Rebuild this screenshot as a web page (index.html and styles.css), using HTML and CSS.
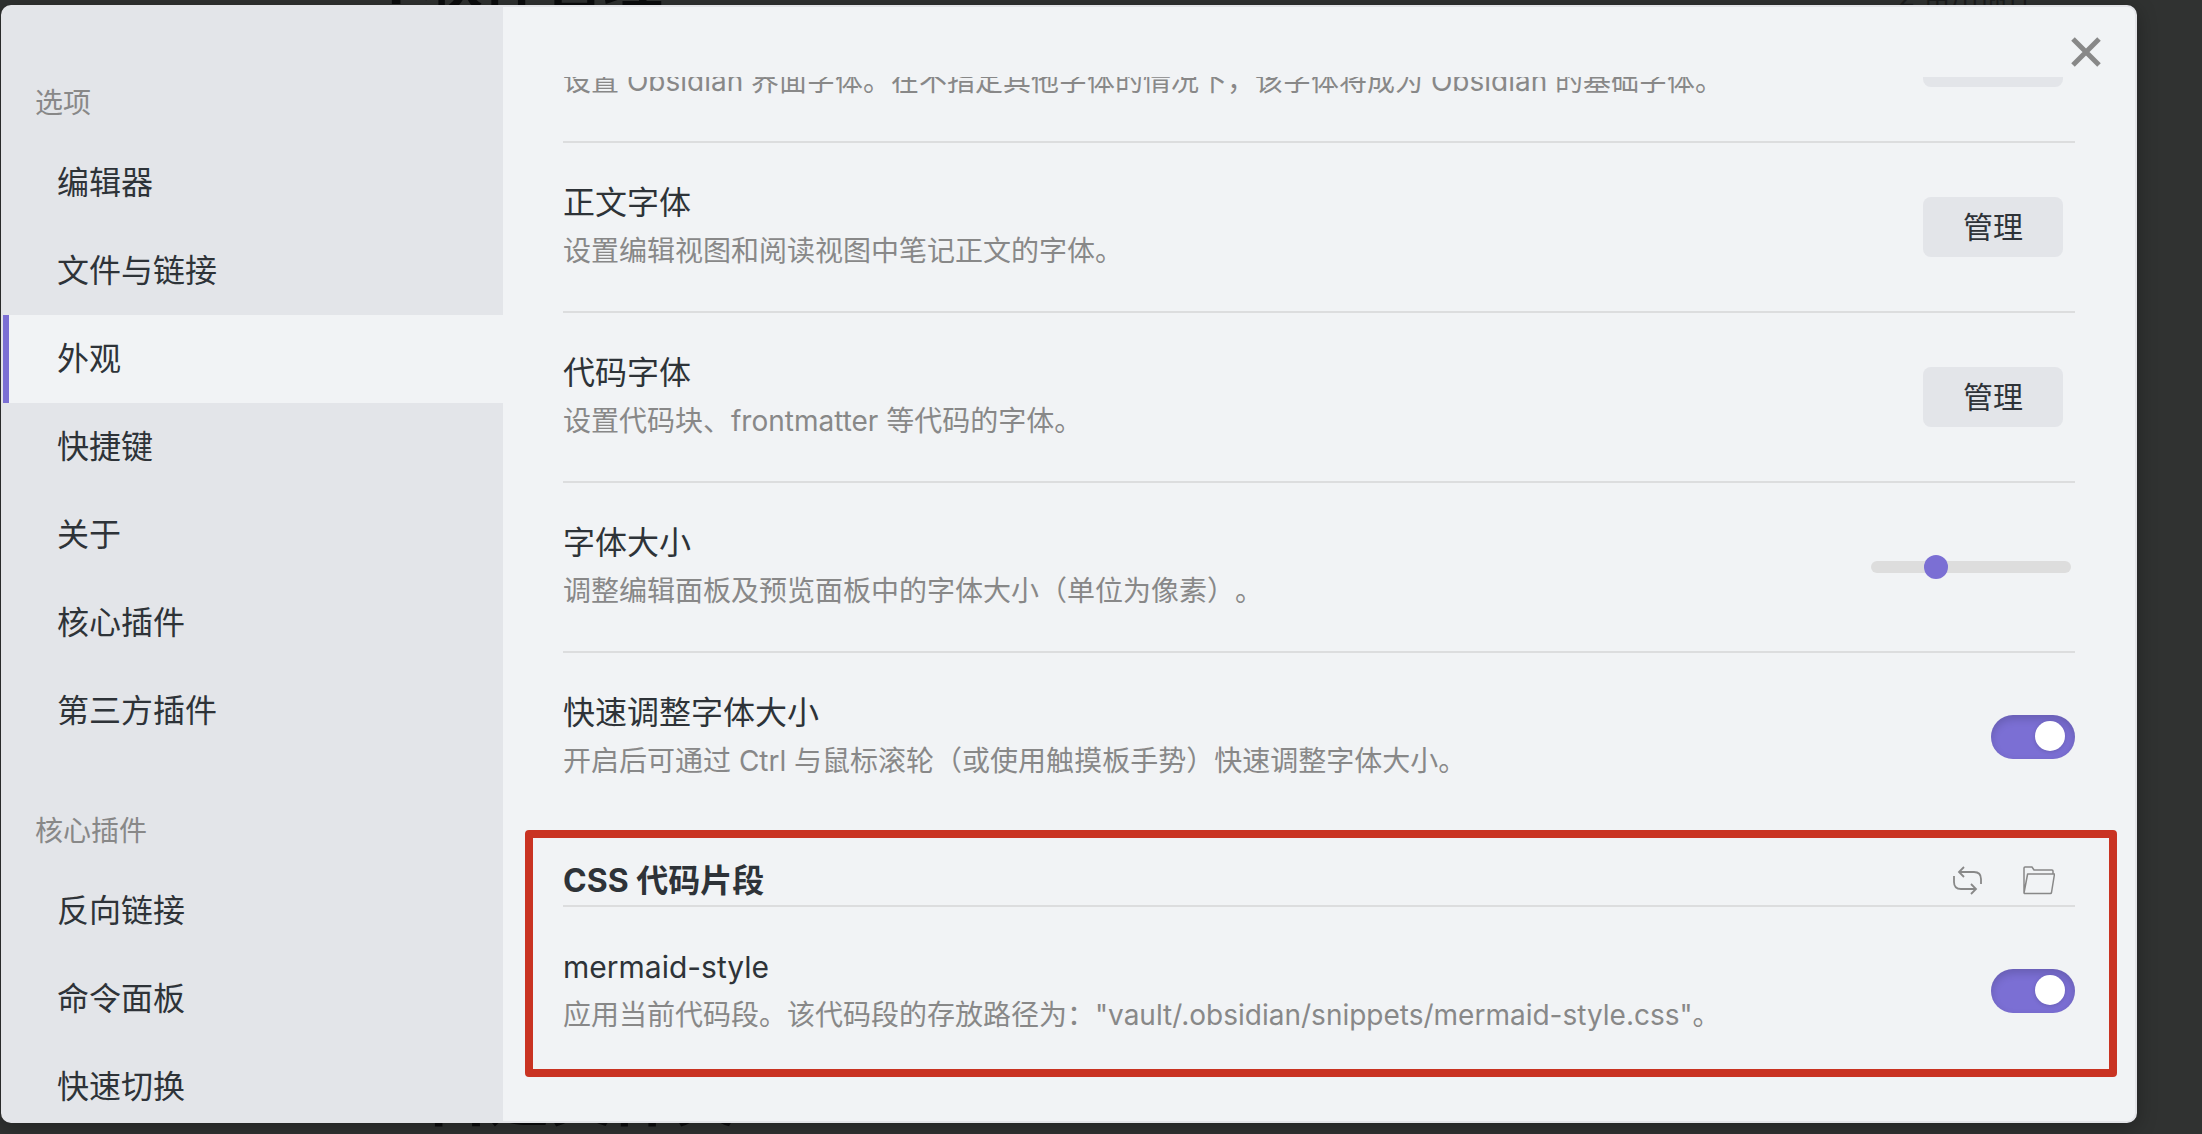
FILE: index.html
```html
<!DOCTYPE html>
<html lang="zh-CN">
<head>
<meta charset="utf-8">
<title>设置</title>
<meta name="viewport" content="width=device-width, initial-scale=1">
<link rel="stylesheet" href="styles.css">
</head>
<body>
<div class="backdrop" aria-hidden="true">
  <span class="note note-top">4 软件管理</span>
  <span class="note note-outline">2 常用插件</span>
  <span class="note note-bottom">自建文件夹</span>
</div>
<div class="modal" role="dialog" aria-label="设置">
  <nav class="sidebar">
    <h2 class="nav-title">选项</h2>
    <a class="nav-item" href="#editor">编辑器</a>
    <a class="nav-item" href="#files">文件与链接</a>
    <a class="nav-item active" href="#appearance" aria-current="page">外观</a>
    <a class="nav-item" href="#hotkeys">快捷键</a>
    <a class="nav-item" href="#about">关于</a>
    <a class="nav-item" href="#core">核心插件</a>
    <a class="nav-item" href="#community">第三方插件</a>
    <h2 class="nav-title">核心插件</h2>
    <a class="nav-item" href="#backlink">反向链接</a>
    <a class="nav-item" href="#command">命令面板</a>
    <a class="nav-item" href="#switcher">快速切换</a>
  </nav>
  <main class="content">
    <div class="row">
      <div class="info">
        <div class="name">界面字体</div>
        <div class="desc">设置 Obsidian 界面字体。在不指定其他字体的情况下，该字体将成为 Obsidian 的基础字体。</div>
      </div>
      <button class="btn" type="button">管理</button>
    </div>
    <div class="row">
      <div class="info">
        <div class="name">正文字体</div>
        <div class="desc">设置编辑视图和阅读视图中笔记正文的字体。</div>
      </div>
      <button class="btn" type="button">管理</button>
    </div>
    <div class="row">
      <div class="info">
        <div class="name">代码字体</div>
        <div class="desc">设置代码块、frontmatter 等代码的字体。</div>
      </div>
      <button class="btn" type="button">管理</button>
    </div>
    <div class="row">
      <div class="info">
        <label class="name" for="font-size">字体大小</label>
        <div class="desc">调整编辑面板及预览面板中的字体大小（单位为像素）。</div>
      </div>
      <input class="slider" id="font-size" type="range" min="10" max="30" value="16">
    </div>
    <div class="row">
      <div class="info">
        <label class="name" for="quick-size">快速调整字体大小</label>
        <div class="desc">开启后可通过 Ctrl 与鼠标滚轮（或使用触摸板手势）快速调整字体大小。</div>
      </div>
      <input class="toggle" id="quick-size" type="checkbox" checked>
    </div>
    <section class="snippets">
      <header class="heading">
        <h3 class="heading-text">CSS 代码片段</h3>
        <button class="icon-btn" type="button" aria-label="重新加载代码片段">
          <svg width="32" height="32" viewBox="0 0 32 32" fill="none" stroke="#888" stroke-width="1.800">
            <path d="M11 2 6 7l5 5M6 7h15q7 0 7 7v5M1 11v6q0 7 7 7h15M18 19l5 5-5 5"/>
          </svg>
        </button>
        <button class="icon-btn" type="button" aria-label="打开代码片段文件夹">
          <svg width="32" height="32" viewBox="0 0 32 32" fill="none" stroke="#888" stroke-width="1.5" stroke-linejoin="round">
            <path d="M1 28V3q0-1 1-1h7l2 3h18q1 0 1 1v3M1 28 4.600 9H31.500L28.500 27.500q-.2 1-1 1H1.500z"/>
          </svg>
        </button>
      </header>
      <div class="row first">
        <div class="info">
          <label class="name latin" for="snippet">mermaid-style</label>
          <div class="desc">应用当前代码段。该代码段的存放路径为："vault/.obsidian/snippets/mermaid-style.css"。</div>
        </div>
        <input class="toggle" id="snippet" type="checkbox" checked>
      </div>
      <div class="highlight" aria-hidden="true"></div>
    </section>
  </main>
  <button class="close" type="button" aria-label="关闭">
    <svg width="30" height="30" viewBox="0 0 30 30" fill="none" stroke="#888" stroke-width="5">
      <path d="M2 2 28 28M28 2 2 28"/>
    </svg>
  </button>
</div>
</body>
</html>
```
FILE: styles.css
```css
* { box-sizing: border-box; }

body {
  margin: 0;
  height: 100vh;
  overflow: hidden;
  padding: 5px 65px 11px 1px;
  background: #303231;
  color: #2e3338;
  font-family: Inter, "Noto Sans CJK SC", sans-serif;
  text-spacing-trim: space-all;
}

/* dimmed page behind the dialog */
.backdrop { position: absolute; inset: 0; overflow: hidden; }
.note { position: absolute; white-space: nowrap; line-height: 1; color: #0b0c0d; font-weight: 700; }
.note-top { top: -48px; left: 368px; font-size: 60px; }
.note-outline { top: -18px; left: 1898px; font-size: 28px; font-weight: 400; color: #1c1d1d; }
.note-bottom { bottom: 4px; left: 426px; font-size: 62px; }

.modal {
  position: relative;
  display: flex;
  height: 100%;
  overflow: hidden;
  border: 2px solid #e3e4e8;
  border-radius: 10px;
  background: #f1f3f5;
  box-shadow: 0 4px 20px rgba(0, 0, 0, .3);
}

.sidebar {
  flex: 0 0 500px;
  overflow: hidden;
  padding-top: 20px;
  background: #e3e5e9;
}
.nav-title {
  margin: 0;
  padding: 56px 32px 16px;
  font-size: 28px;
  font-weight: 400;
  line-height: 40px;
  color: #888;
}
.nav-item {
  display: block;
  padding: 20px 48px;
  border-left: 6px solid transparent;
  font-size: 32px;
  line-height: 48px;
  color: inherit;
  text-decoration: none;
}
.nav-item.active { border-left-color: #7b6fd4; background: #f1f3f5; }

/* the settings list is scrolled to its end */
.content {
  flex: 1;
  display: flex;
  flex-direction: column;
  justify-content: flex-end;
  min-width: 0;
  margin-top: 70px;
  padding: 0 60px 46px;
  overflow: hidden;
}
.row {
  flex: none;
  display: flex;
  align-items: center;
  padding: 36px 0;
  border-top: 2px solid #dcddde;
}
.row.first { border-top: 0; }
.info { flex: 1; min-width: 0; }
.name { display: block; font-size: 32px; line-height: 48px; }
.name.latin { font-size: 30px; }
.desc { font-size: 28px; line-height: 48px; color: #888; }

.btn {
  width: 140px;
  height: 60px;
  margin-right: 12px;
  padding: 0 0 4px;
  border: 0;
  border-radius: 8px;
  background: #e3e5e9;
  color: inherit;
  font: inherit;
  font-size: 30px;
}

.slider {
  appearance: none;
  width: 200px;
  height: 12px;
  margin: 0 4px 0 0;
  border-radius: 6px;
  background: #ddd;
}
.slider::-webkit-slider-thumb {
  appearance: none;
  width: 24px;
  height: 24px;
  border-radius: 50%;
  background: #7b6fd4;
}

.toggle {
  appearance: none;
  width: 84px;
  height: 44px;
  margin: 0;
  padding: 6px 10px;
  display: flex;
  justify-content: flex-end;
  border-radius: 22px;
  background: #7b6fd4;
  box-shadow: inset 0 4px 8px rgba(0, 0, 0, .16);
}
.toggle::before {
  content: "";
  width: 30px;
  height: 30px;
  border-radius: 50%;
  background: #fff;
  box-shadow: 0 1px 4px rgba(0, 0, 0, .15);
}

.snippets { flex: none; position: relative; }
.heading {
  display: flex;
  align-items: center;
  gap: 38px;
  padding: 36px 20px 0 0;
  border-bottom: 2px solid #dcddde;
}
.heading-text { flex: 1; margin: 0; font-size: 32px; font-weight: 700; line-height: 48px; }
.icon-btn { display: flex; padding: 0; border: 0; background: none; }
.highlight {
  position: absolute;
  inset: 9px -42px -2px -38px;
  border: 8px solid #c93322;
  border-radius: 4px;
  pointer-events: none;
}

.close {
  position: absolute;
  top: 30px;
  right: 34px;
  display: flex;
  padding: 0;
  border: 0;
  background: none;
}
```
